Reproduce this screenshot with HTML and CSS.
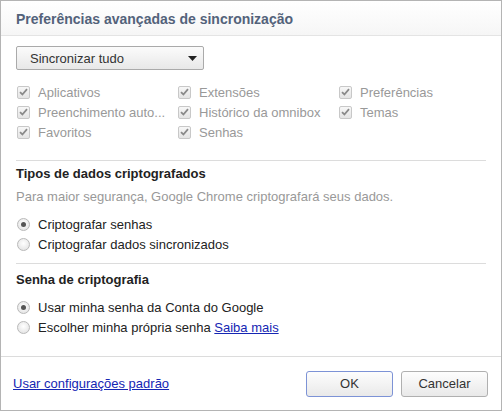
FILE: index.html
```html
<!DOCTYPE html>
<html>
<head>
<meta charset="utf-8">
<link rel="stylesheet" href="styles.css">
</head>
<body>
<div class="dialog">
  <div class="titlebar">Preferências avançadas de sincronização</div>
  <div class="content">
    <div class="select">
      <span>Sincronizar tudo</span>
      <svg class="arrow" width="9" height="5" viewBox="0 0 9 5"><path d="M0 0H9L4.5 5Z" fill="#222"/></svg>
    </div>
    <div class="grid">
      <div class="cb"><span class="box"><svg width="9" height="8" viewBox="0 0 9 8"><path d="M1 4.2L3.4 6.5L8 1.2" fill="none" stroke="#8a8a8a" stroke-width="1.8"/></svg></span>Aplicativos</div>
      <div class="cb"><span class="box"><svg width="9" height="8" viewBox="0 0 9 8"><path d="M1 4.2L3.4 6.5L8 1.2" fill="none" stroke="#8a8a8a" stroke-width="1.8"/></svg></span>Extensões</div>
      <div class="cb"><span class="box"><svg width="9" height="8" viewBox="0 0 9 8"><path d="M1 4.2L3.4 6.5L8 1.2" fill="none" stroke="#8a8a8a" stroke-width="1.8"/></svg></span>Preferências</div>
      <div class="cb"><span class="box"><svg width="9" height="8" viewBox="0 0 9 8"><path d="M1 4.2L3.4 6.5L8 1.2" fill="none" stroke="#8a8a8a" stroke-width="1.8"/></svg></span>Preenchimento auto...</div>
      <div class="cb"><span class="box"><svg width="9" height="8" viewBox="0 0 9 8"><path d="M1 4.2L3.4 6.5L8 1.2" fill="none" stroke="#8a8a8a" stroke-width="1.8"/></svg></span>Histórico da omnibox</div>
      <div class="cb"><span class="box"><svg width="9" height="8" viewBox="0 0 9 8"><path d="M1 4.2L3.4 6.5L8 1.2" fill="none" stroke="#8a8a8a" stroke-width="1.8"/></svg></span>Temas</div>
      <div class="cb"><span class="box"><svg width="9" height="8" viewBox="0 0 9 8"><path d="M1 4.2L3.4 6.5L8 1.2" fill="none" stroke="#8a8a8a" stroke-width="1.8"/></svg></span>Favoritos</div>
      <div class="cb"><span class="box"><svg width="9" height="8" viewBox="0 0 9 8"><path d="M1 4.2L3.4 6.5L8 1.2" fill="none" stroke="#8a8a8a" stroke-width="1.8"/></svg></span>Senhas</div>
    </div>
    <div class="section">
      <div class="heading">Tipos de dados criptografados</div>
      <div class="hint">Para maior segurança, Google Chrome criptografará seus dados.</div>
      <div class="radio first"><span class="dot on"></span>Criptografar senhas</div>
      <div class="radio"><span class="dot"></span>Criptografar dados sincronizados</div>
    </div>
    <div class="section second">
      <div class="heading">Senha de criptografia</div>
      <div class="radio first"><span class="dot on"></span>Usar minha senha da Conta do Google</div>
      <div class="radio"><span class="dot"></span>Escolher minha própria senha&nbsp;<a class="link" href="#">Saiba mais</a></div>
    </div>
  </div>
  <div class="footer">
    <a class="link" href="#">Usar configurações padrão</a>
    <div class="buttons">
      <span class="btn ok">OK</span>
      <span class="btn">Cancelar</span>
    </div>
  </div>
</div>
</body>
</html>
```
FILE: styles.css
```css
html, body { margin: 0; padding: 0; }
body {
  width: 502px;
  height: 411px;
  font-family: "Liberation Sans", Arial, sans-serif;
  font-size: 13px;
  color: #222;
  background: #fff;
}
.dialog {
  box-sizing: border-box;
  width: 502px;
  height: 411px;
  border: 1px solid #b4b4b4;
  display: flex;
  flex-direction: column;
}
.titlebar {
  height: 35px;
  box-sizing: border-box;
  padding: 10px 0 0 15px;
  font-weight: bold;
  font-size: 14px;
  color: #53627a;
  background: linear-gradient(#ffffff, #f6f6f6);
  border-bottom: 1px solid #e4e4e4;
}
.content {
  flex: 1;
  padding: 10px 15px 0 15px;
}
.select {
  border: 1px solid #aaa;
  border-radius: 2px;
  background: linear-gradient(#fbfbfb, #e8e8e8);
  display: flex;
  align-items: center;
  justify-content: space-between;
  padding: 0 6px 0 13px;
  box-sizing: border-box;
  width: 188px;
  height: 24px;
  color: #333;
}
.grid {
  margin-top: 13px;
  display: grid;
  grid-template-columns: 161px 161px 1fr;
  row-gap: 2px;
  color: #999;
}
.cb {
  display: flex;
  align-items: center;
  height: 18px;
  white-space: nowrap;
}
.box {
  width: 13px;
  height: 13px;
  box-sizing: border-box;
  border: 1px solid #c8c8c8;
  border-radius: 2px;
  background: linear-gradient(#f7f7f7, #e4e4e4);
  display: flex;
  align-items: center;
  justify-content: center;
  margin: 0 8px 0 1px;
}
.section {
  margin-top: 19px;
  border-top: 1px solid #dcdcdc;
  padding-top: 4px;
}
.heading {
  font-weight: bold;
  height: 18px;
  line-height: 18px;
}
.hint {
  color: #999;
  margin-top: 5px;
  height: 18px;
  line-height: 18px;
}
.radio {
  display: flex;
  align-items: center;
  height: 20px;
  white-space: nowrap;
}
.radio.first { margin-top: 8px; }
.dot {
  width: 13px;
  height: 13px;
  box-sizing: border-box;
  border: 1px solid #b9b9b9;
  border-radius: 50%;
  background: radial-gradient(circle at 50% 40%, #ffffff, #dedede);
  margin: 0 8px 0 1px;
  position: relative;
}
.dot.on::after {
  content: "";
  position: absolute;
  left: 3px;
  top: 3px;
  width: 5px;
  height: 5px;
  border-radius: 50%;
  background: #555;
}
.section.second { margin-top: 9px; padding-top: 7px; }
.link { color: #1526b3; text-decoration: underline; }
.footer {
  height: 54px;
  box-sizing: border-box;
  border-top: 1px solid #dcdcdc;
  display: flex;
  align-items: center;
  justify-content: space-between;
  padding: 0 13px 0 12px;
}
.buttons { display: flex; gap: 8px; }
.btn {
  width: 87px;
  height: 26px;
  box-sizing: border-box;
  border: 1px solid #b0b0b0;
  border-radius: 3px;
  background: linear-gradient(#fdfdfd, #e9e9e9);
  display: flex;
  align-items: center;
  justify-content: center;
  color: #333;
}
.btn.ok { border-color: #7d93d6; }
```
